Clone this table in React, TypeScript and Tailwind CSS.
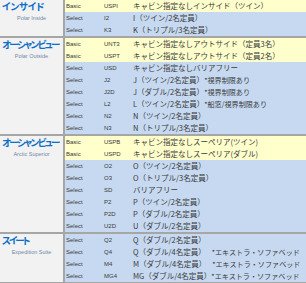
import React from 'react';

type Row = { type: 'Basic' | 'Select'; code: string; desc: string; note?: string; gap?: boolean };

interface Group {
  title: string;
  tracking: string;
  sub: string;
  rows: Row[];
}

const groups: Group[] = [
  {
    title: 'インサイド',
    tracking: 'tracking-[-0.2px]',
    sub: 'Polar Inside',
    rows: [
      { type: 'Basic', code: 'USPI', desc: 'キャビン指定なしインサイド（ツイン）' },
      { type: 'Select', code: 'I2', desc: 'I（ツイン/2名定員）' },
      { type: 'Select', code: 'K3', desc: 'K（トリプル/3名定員）' },
    ],
  },
  {
    title: 'オーシャンビュー',
    tracking: 'tracking-[-1.6px]',
    sub: 'Polar Outside',
    rows: [
      { type: 'Basic', code: 'UNT3', desc: 'キャビン指定なしアウトサイド（定員3名）' },
      { type: 'Basic', code: 'USPT', desc: 'キャビン指定なしアウトサイド（定員2名）' },
      { type: 'Select', code: 'USD', desc: 'キャビン指定なしバリアフリー' },
      { type: 'Select', code: 'J2', desc: 'J（ツイン/2名定員）', note: '*視界制限あり' },
      { type: 'Select', code: 'J2D', desc: 'J（ダブル/2名定員）', note: '*視界制限あり' },
      { type: 'Select', code: 'L2', desc: 'L（ツイン/2名定員）', note: '*船窓/視界制限あり' },
      { type: 'Select', code: 'N2', desc: 'N（ツイン/2名定員）' },
      { type: 'Select', code: 'N3', desc: 'N（トリプル/3名定員）' },
    ],
  },
  {
    title: 'オーシャンビュー',
    tracking: 'tracking-[-1.6px]',
    sub: 'Arctic Superior',
    rows: [
      { type: 'Basic', code: 'USPB', desc: 'キャビン指定なしスーペリア(ツイン)' },
      { type: 'Basic', code: 'USPD', desc: 'キャビン指定なしスーペリア(ダブル)' },
      { type: 'Select', code: 'O2', desc: 'O（ツイン/2名定員）' },
      { type: 'Select', code: 'O3', desc: 'O（トリプル/3名定員）' },
      { type: 'Select', code: 'SD', desc: 'バリアフリー' },
      { type: 'Select', code: 'P2', desc: 'P（ツイン/2名定員）' },
      { type: 'Select', code: 'P2D', desc: 'P（ダブル/2名定員）' },
      { type: 'Select', code: 'U2D', desc: 'U（ダブル/2名定員）' },
    ],
  },
  {
    title: 'スイート',
    tracking: 'tracking-[-2px]',
    sub: 'Expedition Suite',
    rows: [
      { type: 'Select', code: 'Q2', desc: 'Q（ダブル/2名定員）' },
      { type: 'Select', code: 'Q4', desc: 'Q（ダブル/4名定員）', note: '*エキストラ・ソファベッド', gap: true },
      { type: 'Select', code: 'M4', desc: 'M（ダブル/4名定員）', note: '*エキストラ・ソファベッド', gap: true },
      { type: 'Select', code: 'MG4', desc: 'MG（ダブル/4名定員）', note: '*エキストラ・ソファベッド' },
    ],
  },
];

export default function App() {
  return (
    <div className="w-[306px] h-[283px] overflow-hidden bg-white">
      {groups.map((g, gi) => (
        <div key={gi} className="flex border-b-2 border-[#a6a6a6]">
          {/* 左列 */}
          <div className="w-[65px] shrink-0 bg-[#f2f2f2] border-r-2 border-[#a6a6a6] overflow-hidden">
            <div
              className={`h-[12px] pl-[2px] flex items-center whitespace-nowrap text-[9.5px] font-bold text-[#0b6fc6] [font-feature-settings:'palt'] font-['Noto_Sans_CJK_JP',sans-serif] ${g.tracking}`}
            >
              {g.title}
            </div>
            <div className="h-[12px] flex items-center justify-center text-[5.5px] text-[#7088a4] font-['Liberation_Sans',sans-serif]">
              {g.sub}
            </div>
          </div>

          {/* 行 */}
          <div className="flex-1 min-w-0 overflow-hidden">
            {g.rows.map((r, ri) => (
              <div
                key={ri}
                className={`h-[12px] flex items-center text-[#3a3a3a] whitespace-nowrap ${
                  r.type === 'Basic' ? 'bg-[#ffffcc]' : 'bg-[#c6d9f1]'
                }`}
              >
                <div className="w-[38px] shrink-0 pl-[1px] text-[6px] font-['Liberation_Sans',sans-serif]">{r.type}</div>
                <div className="w-[29px] shrink-0 pl-[1px] text-[6px] font-['Liberation_Sans',sans-serif]">{r.code}</div>
                <div className="shrink-0 pl-[1px] text-[7.5px] font-['Noto_Sans_CJK_JP',sans-serif]">
                  {r.desc}
                  {r.note && (
                    <span className={`text-[7.1px] ${r.gap ? 'ml-[6px]' : ''}`}>{r.note}</span>
                  )}
                </div>
              </div>
            ))}
          </div>
        </div>
      ))}
    </div>
  );
}
